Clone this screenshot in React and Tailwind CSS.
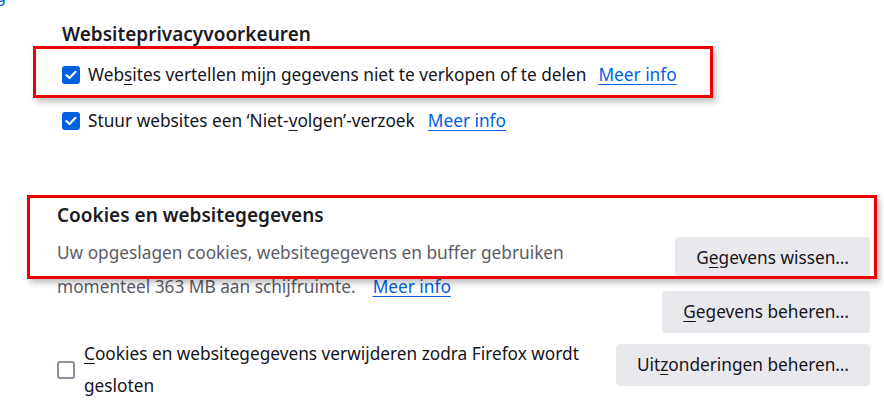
import React from "react";

const font = { fontFamily: '"Noto Sans", "Open Sans", sans-serif' };

function Check({ checked }) {
  if (checked) {
    return (
      <span className="flex h-[18px] w-[18px] shrink-0 items-center justify-center rounded-[3px] bg-[#0061e0]">
        <svg width="12" height="10" viewBox="0 0 12 10" fill="none">
          <path d="M1.5 5.2 L4.5 8 L10.5 1.8" stroke="white" strokeWidth="2.2" strokeLinecap="round" strokeLinejoin="round" />
        </svg>
      </span>
    );
  }
  return <span className="block h-[18px] w-[18px] shrink-0 rounded-[3px] border-2 border-[#8f8f9d] bg-white" />;
}

function Link({ children }) {
  return <a className="text-[#0061e0] underline underline-offset-[3px] decoration-1">{children}</a>;
}

function Btn({ children }) {
  return (
    <button className="h-[42px] rounded-[4px] bg-[#e9e9ed] px-[21px] text-[17.25px] text-[#15141a]">{children}</button>
  );
}

export default function App() {
  return (
    <div style={font} className="relative h-[406px] w-[884px] overflow-hidden bg-white text-[#15141a]">
      <span className="absolute left-[-4px] top-[-16px] text-[16px] text-[#0061e0]">g</span>

      {/* Website privacy preferences */}
      <section className="pl-[62px] pt-[22px]">
        <h2 className="text-[19px] font-semibold leading-[24px] text-[#1c1b22]">Websiteprivacyvoorkeuren</h2>
        <div className="mt-[17px] flex h-[24px] items-center gap-[8px] text-[17.25px]">
          <Check checked />
          <span>
            Web<span className="underline underline-offset-[3px]">s</span>ites vertellen mijn gegevens niet te verkopen of te delen
          </span>
          <span className="ml-[4px]"><Link>Meer info</Link></span>
        </div>
        <div className="mt-[22px] flex h-[24px] items-center gap-[8px] text-[17.25px]">
          <Check checked />
          <span>
            Stuur websites een ‘Niet-<span className="underline underline-offset-[3px]">v</span>olgen’-verzoek
          </span>
          <span className="ml-[5px]"><Link>Meer info</Link></span>
        </div>
      </section>

      {/* Cookies and site data */}
      <section className="pl-[57px] pr-[14px] pt-[70px]">
        <h2 className="text-[19px] font-semibold leading-[24px] text-[#1c1b22]">Cookies en websitegegevens</h2>
        <div className="mt-[9px] flex items-start justify-between">
          <p className="text-[17.25px] leading-[34px] text-[#5b5b66]">
            <span className="block">Uw opgeslagen cookies, websitegegevens en buffer gebruiken</span>
            <span className="block">
              momenteel 363 MB aan schijfruimte.<span className="ml-[17px]"><Link>Meer info</Link></span>
            </span>
          </p>
          <div className="mt-[1px] flex flex-col items-end gap-[12px]">
            <Btn>
              G<span className="underline underline-offset-[3px]">e</span>gevens wissen…
            </Btn>
            <Btn>
              <span className="underline underline-offset-[3px]">G</span>egevens beheren…
            </Btn>
          </div>
        </div>
        <div className="mt-[5px] flex items-start justify-between">
          <div className="flex items-center gap-[9px]">
            <Check />
            <p className="text-[17.25px] leading-[32px]">
              <span className="block">
                <span className="underline underline-offset-[3px]">C</span>ookies en websitegegevens verwijderen zodra Firefox wordt
              </span>
              <span className="block">gesloten</span>
            </p>
          </div>
          <div className="mt-[6px]">
            <Btn>
              Uit<span className="underline underline-offset-[3px]">z</span>onderingen beheren…
            </Btn>
          </div>
        </div>
      </section>

      {/* Red annotation frames */}
      <div className="pointer-events-none absolute left-[33px] top-[46px] h-[52px] w-[680px] border-[3px] border-[#ee0000] shadow-[3px_4px_6px_rgba(0,0,0,0.25)]" />
      <div className="pointer-events-none absolute left-[27px] top-[195px] h-[84px] w-[850px] border-[3px] border-[#ee0000] shadow-[3px_4px_6px_rgba(0,0,0,0.25)]" />
    </div>
  );
}
